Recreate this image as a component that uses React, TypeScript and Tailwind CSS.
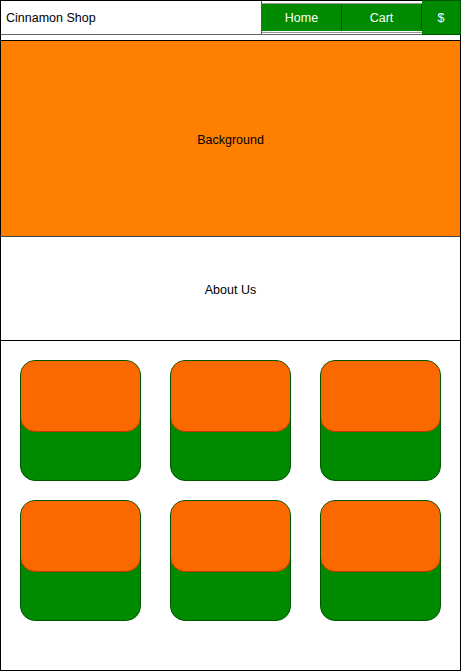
import React from "react";

function Card() {
  return (
    <div className="relative w-[121px] h-[121px] rounded-[15px] bg-[#008a00] border border-[#005700] overflow-hidden">
      <div className="absolute left-[-1px] top-[-1px] w-[121px] h-[72px] rounded-[15px] bg-[#fa6800] border border-[#c73500]" />
    </div>
  );
}

export default function App() {
  const font = { fontFamily: '"Liberation Sans", Arial, sans-serif' };
  return (
    <div style={font} className="w-[462px] h-[671px] bg-white">
      <div className="w-[461px] h-[671px] border border-black flex flex-col text-[12.5px] text-black">
        <div className="flex h-[34px] border-b border-[#666]">
          <div className="w-[261px] border-r border-[#555] flex items-center pl-[5px] pt-[2px]">Cinnamon Shop</div>
          <div className="w-[160px] flex flex-col pt-[2px]">
            <div className="h-[30px] border-y border-[#999] bg-white flex">
              <div className="flex-1 flex items-center justify-center bg-[#008a00] text-white border-r border-[#005700] mb-[1px] pt-[2px]">Home</div>
              <div className="flex-1 flex items-center justify-center bg-[#008a00] text-white border-r border-[#005700] mb-[1px] pt-[2px]">Cart</div>
            </div>
          </div>
          <div className="flex-1 -mt-[1px] -mr-[1px] -mb-[1px] flex items-center justify-center bg-[#008a00] text-white border border-[#005700] border-l-0 pt-[2px]">$</div>
        </div>
        <div className="h-[5px]" />
        <div className="h-[197px] border-t border-black border-b border-b-[#444] bg-[#ff8000] flex items-center justify-center pt-[3px]">Background</div>
        <div className="h-[104px] border-b border-black flex items-center justify-center pt-[3px]">About Us</div>
        <div className="flex-1 pt-[19px] pl-[19px] grid grid-cols-[121px_121px_121px] gap-x-[29px] gap-y-[19px] content-start">
          <Card />
          <Card />
          <Card />
          <Card />
          <Card />
          <Card />
        </div>
      </div>
    </div>
  );
}
